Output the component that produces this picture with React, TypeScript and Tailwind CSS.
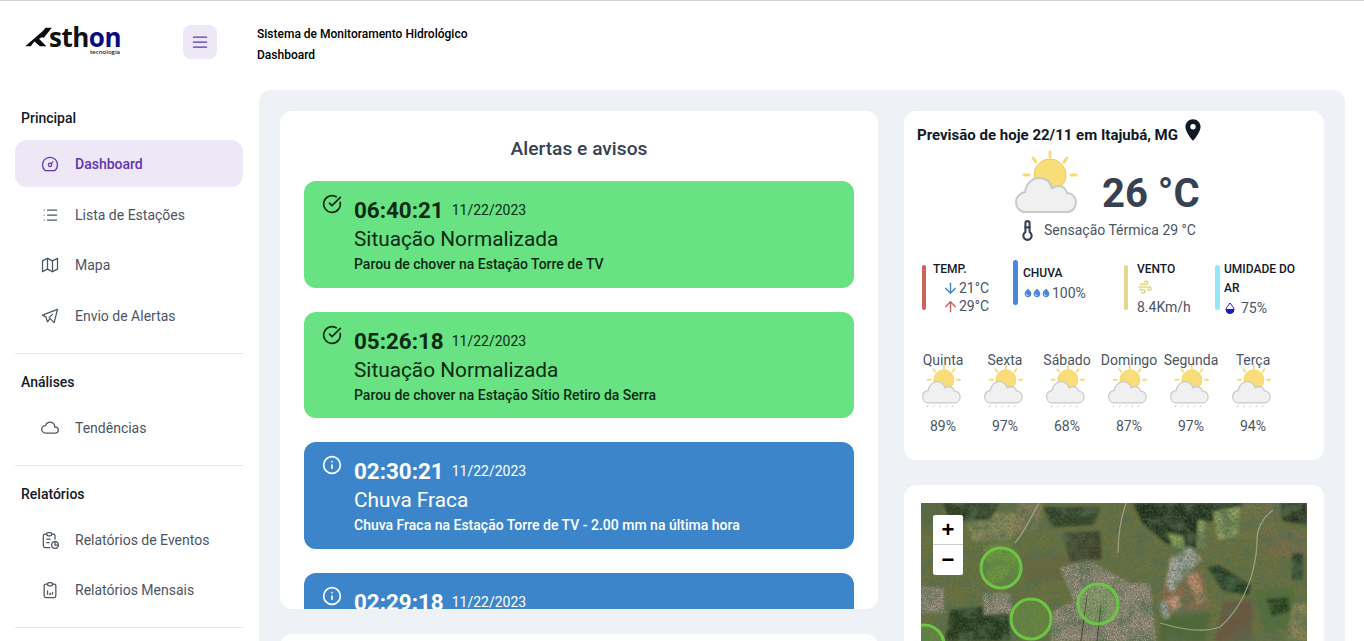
import type { ReactNode } from "react";
import { Info, CircleCheckBig } from "lucide-react";
import {
  TbBrandTelegram,
  TbClipboardData,
  TbCloud,
  TbDashboard,
  TbList,
  TbMap,
  TbMenu2,
  TbReport,
  TbTemperature,
  TbWind,
} from "react-icons/tb";
import { MdArrowDownward, MdArrowUpward, MdLocationOn, MdWaterDrop } from "react-icons/md";

/* ── Logo ── */

function Logo() {
  return (
    <div className="relative h-[32px] w-[96px] font-['Open_Sans',sans-serif]">
      <svg viewBox="0 0 30 24" className="absolute left-0 top-[4px] h-[22px] w-[28px]">
        <path d="M0 22 L22 3 L21 11 L15 14 L23 22 L16 22 L10 17 L6 22 Z" fill="#0b0b14" />
        <path d="M29 2 L22 2 L17 11 L20 13 Z" fill="#0b0b14" />
      </svg>
      <span className="absolute left-[24px] top-[-1px] text-[26px] leading-[32px] font-bold tracking-[-0.5px] text-[#111]">
        sth<span className="text-[#0a0a80]">on</span>
      </span>
      <span className="absolute left-[65px] top-[26px] text-[6px] font-semibold leading-[8px] text-[#222]">
        tecnologia
      </span>
    </div>
  );
}

/* ── Sidebar ── */

function NavItem({ icon, label, active }: { icon: ReactNode; label: string; active?: boolean }) {
  return (
    <div
      className={`flex h-[47px] items-center rounded-xl pl-[25px] text-sm ${
        active ? "bg-[#ede7f6] font-medium text-[#5e35b1]" : "text-[#4b5565]"
      }`}
    >
      <span className="flex w-[35px] shrink-0">{icon}</span>
      {label}
    </div>
  );
}

function SectionTitle({ children }: { children: ReactNode }) {
  return <div className="pl-[6px] text-sm font-medium leading-[20px] text-[#121926]">{children}</div>;
}

function Sidebar() {
  const ic = "h-[20px] w-[20px] stroke-[1.5]";
  return (
    <aside className="w-[259px] shrink-0 pl-[15px] pr-[16px]">
      <div className="pt-[18px]">
        <SectionTitle>Principal</SectionTitle>
      </div>
      <div className="mt-[12px]">
        <NavItem active icon={<TbDashboard className={ic} />} label="Dashboard" />
        <div className="mt-[4px]">
          <NavItem icon={<TbList className={ic} />} label="Lista de Estações" />
        </div>
        <div className="mt-[3px]">
          <NavItem icon={<TbMap className={ic} />} label="Mapa" />
        </div>
        <div className="mt-[4px]">
          <NavItem icon={<TbBrandTelegram className={ic} />} label="Envio de Alertas" />
        </div>
      </div>
      <div className="mt-[14px] border-t border-[#e3e8ef]" />
      <div className="mt-[18px]">
        <SectionTitle>Análises</SectionTitle>
      </div>
      <div className="mt-[12px]">
        <NavItem icon={<TbCloud className={ic} />} label="Tendências" />
      </div>
      <div className="mt-[14px] border-t border-[#e3e8ef]" />
      <div className="mt-[18px]">
        <SectionTitle>Relatórios</SectionTitle>
      </div>
      <div className="mt-[12px]">
        <NavItem icon={<TbReport className={ic} />} label="Relatórios de Eventos" />
        <div className="mt-[3px]">
          <NavItem icon={<TbClipboardData className={ic} />} label="Relatórios Mensais" />
        </div>
      </div>
      <div className="mt-[14px] border-t border-[#e3e8ef]" />
    </aside>
  );
}

/* ── Alerts ── */

type Alert = { time: string; title: string; text: string; kind: "ok" | "info" };

const alerts: Alert[] = [
  { time: "06:40:21", title: "Situação Normalizada", text: "Parou de chover na Estação Torre de TV", kind: "ok" },
  { time: "05:26:18", title: "Situação Normalizada", text: "Parou de chover na Estação Sítio Retiro da Serra", kind: "ok" },
  { time: "02:30:21", title: "Chuva Fraca", text: "Chuva Fraca na Estação Torre de TV - 2.00 mm na última hora", kind: "info" },
  { time: "02:29:18", title: "Chuva Fraca", text: "Chuva Fraca na Estação Sítio Retiro da Serra", kind: "info" },
];

function AlertCard({ alert }: { alert: Alert }) {
  const ok = alert.kind === "ok";
  return (
    <div
      className={`flex h-[106.5px] shrink-0 rounded-xl pl-[18px] pt-[13px] ${
        ok ? "bg-[#69e283] text-[#0d2b14]" : "bg-[#3d85cb] text-white"
      }`}
    >
      <span className="w-[32px] shrink-0">
        {ok ? <CircleCheckBig className="h-[20px] w-[20px]" strokeWidth={2} /> : <Info className="h-[20px] w-[20px]" strokeWidth={2} />}
      </span>
      <div>
        <div className="mt-[2px] flex items-center">
          <span className="text-[22.4px] leading-[28px] font-bold">{alert.time}</span>
          <span className="ml-[8px] text-sm">11/22/2023</span>
        </div>
        <div className="mt-[1px] text-[20.8px] leading-[28px]">{alert.title}</div>
        <div className="mt-[1px] text-sm leading-[21px] font-medium">{alert.text}</div>
      </div>
    </div>
  );
}

function AlertsCard() {
  return (
    <div className="flex h-[498px] flex-col overflow-hidden rounded-xl bg-white px-[24px]">
      <h2 className="mb-[20px] mt-[26px] text-center text-[19.2px] leading-[24px] font-medium text-[#364152]">Alertas e avisos</h2>
      <div className="flex flex-col gap-[24px]">
        {alerts.map((a) => (
          <AlertCard key={a.time} alert={a} />
        ))}
      </div>
    </div>
  );
}

/* ── Weather ── */

function SunCloud({ rain, className }: { rain?: boolean; className: string }) {
  return (
    <svg viewBox={rain ? "0 0 64 70" : "0 0 64 64"} className={className}>
      <g stroke="#f7dc74" strokeWidth="3" strokeLinecap="round">
        <path d="M35 2v5M18 8l3 4M52 8l-3 4M9 25h5M56 25h5" />
      </g>
      <circle cx="35" cy="25" r="16" fill="#f9dd78" stroke="#eccb5c" strokeWidth="1" />
      <path
        d="M10 62c-5 0-9-4-9-10 0-5 4-9 9-10 1-8 7-14 14-14 6 0 11 3 13 10 2-1 4-2 6-2 5 0 8 3 9 7 5 0 9 4 9 9 0 6-4 10-9 10Z"
        fill="#f0f0f0"
        stroke="#c9c9c9"
        strokeWidth="2"
      />
      {rain && (
        <path
          d="M10 66l-2 3M20 66l-2 3M30 66l-2 3M40 66l-2 3M50 66l-2 3"
          stroke="#b5b5b5"
          strokeWidth="1.2"
        />
      )}
    </svg>
  );
}

const forecast = [
  { d: "Quinta", p: "89%" },
  { d: "Sexta", p: "97%" },
  { d: "Sábado", p: "68%" },
  { d: "Domingo", p: "87%" },
  { d: "Segunda", p: "97%" },
  { d: "Terça", p: "94%" },
];

function Stat({
  color,
  w,
  barW = "w-[4px]",
  gap = "ml-[7px]",
  top = "mt-[5px]",
  children,
}: {
  color: string;
  w: string;
  barW?: string;
  gap?: string;
  top?: string;
  children: ReactNode;
}) {
  return (
    <div className={`flex ${w} shrink-0 ${top}`}>
      <span className={`h-[45px] ${barW} shrink-0 rounded-full ${color}`} />
      <div className={`${gap} text-sm leading-[20px] text-[#4b5565]`}>{children}</div>
    </div>
  );
}

function WeatherCard() {
  return (
    <div className="h-[349px] rounded-xl bg-white px-[13px]">
      <div className="flex pt-[6px]">
        <h3 className="mt-[8px] text-[15px] leading-[20px] font-bold text-[#121926]">Previsão de hoje 22/11 em Itajubá, MG</h3>
        <MdLocationOn className="ml-[2px] h-[26px] w-[26px] text-[#121926]" />
      </div>
      <div className="ml-[98px] mt-[5px] flex">
        <SunCloud className="h-[64px] w-[64px]" />
        <span className="ml-[23px] mt-[18px] text-[40px] leading-[52px] font-bold text-[#364152]">26 °C</span>
      </div>
      <div className="ml-[98px] flex h-[20px] items-center text-sm text-[#4b5565]">
        <TbTemperature className="h-[25px] w-[25px] text-[#364152]" />
        <span className="ml-[4px]">Sensação Térmica 29 °C</span>
      </div>

      <div className="ml-[5px] mt-[20px] flex">
        <Stat color="bg-[#c9635f]" w="w-[91px]">
          <div className="mt-[-5px] text-xs leading-[19px] font-medium text-[#121926]">TEMP.</div>
          <div className="ml-[9px] flex h-[18px] items-center">
            <MdArrowDownward className="h-[17px] w-[17px] text-[#3d85c6]" />
            <span>21°C</span>
          </div>
          <div className="ml-[9px] flex h-[18px] items-center">
            <MdArrowUpward className="h-[17px] w-[17px] text-[#c9635f]" />
            <span>29°C</span>
          </div>
        </Stat>
        <Stat color="bg-[#4a85e0]" w="w-[111px]" barW="w-[5px]" gap="ml-[5px]" top="mt-0">
          <div className="mt-[4px] text-xs leading-[18px] font-medium text-[#121926]">CHUVA</div>
          <div className="mt-[2px] flex h-[18px] items-center">
            <MdWaterDrop className="h-[10px] w-[10px] text-[#4a85e0]" />
            <MdWaterDrop className="ml-[-1px] h-[10px] w-[10px] text-[#4a85e0]" />
            <MdWaterDrop className="ml-[-1px] h-[10px] w-[10px] text-[#4a85e0]" />
            <span className="ml-[1px]">100%</span>
          </div>
        </Stat>
        <Stat color="bg-[#e2d98a]" w="w-[91px]" gap="ml-[9px]">
          <div className="mt-[-6px] text-xs leading-[20px] font-medium text-[#121926]">VENTO</div>
          <TbWind className="h-[16px] w-[16px] stroke-[2.5] text-[#e2d98a]" />
          <div className="leading-[24px]">8.4Km/h</div>
        </Stat>
        <Stat color="bg-[#97e6f4]" w="w-[100px]" barW="w-[5px]" gap="ml-[4px]">
          <div className="mt-[-5px] w-[80px] text-xs leading-[19px] font-medium text-[#121926]">UMIDADE DO AR</div>
          <div className="mt-[1px] flex h-[18px] items-center">
            <svg viewBox="0 0 12 12" className="h-[12px] w-[12px]">
              <path d="M6 1 C8 4 10 5.5 10 7.5 A4 4 0 0 1 2 7.5 C2 5.5 4 4 6 1Z" fill="#fff" stroke="#1a1ab8" strokeWidth="1" />
              <path d="M2 7 h8 v.5 A4 4 0 0 1 2 7.5Z" fill="#1a1ab8" />
            </svg>
            <span className="ml-[5px]">75%</span>
          </div>
        </Stat>
      </div>

      <div className="ml-[-5px] mt-[31px] flex">
        {forecast.map((f) => (
          <div key={f.d} className="flex w-[62px] shrink-0 flex-col items-center text-sm text-[#4b5565]">
            <span className="relative z-10 whitespace-nowrap leading-[20px]">{f.d}</span>
            <SunCloud rain className="ml-[-2px] mt-[-6px] h-[44px] w-[40px]" />
            <span className="mt-[8px] leading-[20px]">{f.p}</span>
          </div>
        ))}
      </div>
    </div>
  );
}

/* ── Map ── */

function SatelliteMap() {
  return (
    <svg viewBox="0 0 386 138" preserveAspectRatio="none" className="block h-[138px] w-[386px]">
      <defs>
        <filter id="soft" x="-10%" y="-10%" width="120%" height="120%">
          <feGaussianBlur stdDeviation="1.6" />
        </filter>
        <filter id="blotch" x="0" y="0" width="100%" height="100%">
          <feTurbulence type="fractalNoise" baseFrequency="0.07" numOctaves="4" seed="11" />
          <feColorMatrix values="0 0 0 0 0.09  0 0 0 0 0.16  0 0 0 0 0.08  2.6 0 0 0 -1.05" />
        </filter>
        <filter id="grain" x="0" y="0" width="100%" height="100%">
          <feTurbulence type="fractalNoise" baseFrequency="0.45" numOctaves="3" seed="7" />
          <feColorMatrix values="0 0 0 0 0.1  0 0 0 0 0.12  0 0 0 0 0.06  2.2 0 0 0 -0.85" />
        </filter>
        <filter id="roofs" x="0" y="0" width="100%" height="100%">
          <feTurbulence type="fractalNoise" baseFrequency="0.9" numOctaves="2" seed="3" />
          <feColorMatrix values="0 0 0 0 0.85  0 0 0 0 0.8  0 0 0 0 0.75  3 0 0 0 -1.5" />
        </filter>
        <clipPath id="urban">
          <path d="M0 84h22l2 26H0ZM62 90h27l4 20-30 2ZM139 64l30-6 47 26 8 54H129l4-30 20-10-8-18ZM189 80h40l6 58h-46Z" />
        </clipPath>
      </defs>
      <rect width="386" height="138" fill="#6b7340" />
      <g filter="url(#soft)">
        <path d="M42 10h54l-4 27-40 2Z" fill="#8b8a5a" />
        <path d="M0 0h24l-6 18-18 6Z" fill="#5c6a3f" />
        <path d="M22 0h57l-10 17-40 2Z" fill="#2a3a22" />
        <path d="M96 0h26l-6 26-22 4Z" fill="#8b7f5c" />
        <path d="M122 4h57l-6 18-42 2Z" fill="#2e3f25" />
        <path d="M142 30l37-2 2 28-32 3Z" fill="#3e3f2c" />
        <path d="M212 0h110l-8 14-30 5-8 26-30-4-24-20Z" fill="#1c2f1d" />
        <path d="M246 30l16 3 2 14-12-4Z" fill="#84a05a" />
        <path d="M277 17l7 1v26h-8Z" fill="#8fa565" />
        <path d="M292 9l27-6-2 30-20 4Z" fill="#92a262" />
        <path d="M322 0h37l-8 30-30 6Z" fill="#73744a" />
        <path d="M359 0h27v22l-24-4Z" fill="#202f1c" />
        <path d="M340 24l46 4v22l-30 6-14-10Z" fill="#7a7048" />
        <path d="M371 50l11 0v27h-11Z" fill="#28402a" />
        <path d="M99 54l47-2 6 24-47 4Z" fill="#6b6b3e" />
        <path d="M62 42l30-4 10 30-34 14Z" fill="#6f8c3e" />
        <path d="M29 107l57-6 4 37H24Z" fill="#20381d" />
        <path d="M286 64l12-2 32 20-2 10-26-4Z" fill="#233b24" />
        <path d="M247 67l34 0 8 36-36 12-18-8Z" fill="#8e6c50" />
        <path d="M262 70l14 0 10 26-10 6-6-16Z" fill="#b98a68" />
        <path d="M247 96l10-4 4 12-8 6Z" fill="#c59a7c" />
        <path d="M302 100l30-4-2 42h-36Z" fill="#6e5640" />
        <path d="M332 87l40-2 6 36-34 10Z" fill="#52713a" />
        <path d="M345 96l22-2 2 14-18 6Z" fill="#26401f" />
        <path d="M372 100h14v38h-20Z" fill="#8b8755" />
        <path d="M240 112l50-2-6 28h-46Z" fill="#4d6a35" />
        <g clipPath="url(#urban)">
          <rect width="386" height="138" fill="#8f8474" />
        </g>
        <path d="M249 56l20-12 12 12-22 22-8 12-6-8Z" fill="#a9aba6" />
        <path d="M238 100l8-2 3 16-6 2Z" fill="#a5a8a4" />
      </g>
      <rect width="386" height="138" filter="url(#blotch)" opacity="0.75" />
      <rect width="386" height="138" filter="url(#grain)" opacity="0.7" />
      <g clipPath="url(#urban)">
        <rect width="386" height="138" filter="url(#roofs)" opacity="0.45" />
      </g>
      <path
        d="M352 7c-10 8-16 18-16 30 0 12-2 22-4 30-2 10-6 18-10 27-6 12-14 22-23 30-16 6-40 2-60-4M118 0c-8 14-14 28-24 40M205 0c-5 15-8 32-8 50"
        fill="none"
        stroke="#aaa98f"
        strokeWidth="1.2"
        opacity="0.85"
      />
      <path d="M160 138l6-46M176 138l4-36" stroke="#2b2620" strokeWidth="1" opacity="0.7" />
      <g fill="#6bc644" fillOpacity="0.22" stroke="#6bc644" strokeWidth="3">
        <circle cx="80" cy="65" r="20" />
        <circle cx="110" cy="116" r="20" />
        <circle cx="177" cy="101" r="20" />
        <circle cx="3" cy="142" r="20" />
      </g>
    </svg>
  );
}

function MapCard() {
  return (
    <div className="mt-[25px] rounded-xl bg-white px-[17px] pt-[18px]">
      <div className="relative h-[400px] overflow-hidden bg-[#6b7340]">
        <SatelliteMap />
        <div className="absolute left-[12px] top-[12px] w-[30px] overflow-hidden rounded-[2px] bg-white text-center font-['Liberation_Sans',sans-serif] text-[22px] font-bold leading-[30px] text-black">
          <div className="h-[30px] border-b border-[#ccc]">+</div>
          <div className="h-[30px]">−</div>
        </div>
      </div>
    </div>
  );
}

export default function App() {
  return (
    <div className="flex h-screen flex-col overflow-hidden border-t border-[#d5d5cf] bg-white font-['Roboto',sans-serif]">
      <header className="flex h-[89px] shrink-0">
        <div className="ml-[25px] mt-[21px]">
          <Logo />
        </div>
        <button className="ml-[62px] mt-[24px] flex h-[34px] w-[34px] items-center justify-center rounded-lg bg-[#ede7f6] text-[#5e35b1]">
          <TbMenu2 className="h-[20px] w-[20px] stroke-[1.5]" />
        </button>
        <div className="ml-[40px] mt-[23px] text-xs leading-[21px] font-medium text-black">
          <div>Sistema de Monitoramento Hidrológico</div>
          <div>Dashboard</div>
        </div>
      </header>
      <div className="flex min-h-0 flex-1 pr-[19px]">
        <Sidebar />
        <main className="flex flex-1 gap-[26px] rounded-t-xl bg-[#eef2f6] px-[21px] pt-[21px]">
          <div className="w-[598px] shrink-0">
            <AlertsCard />
            <div className="mt-[25px] h-[200px] rounded-xl bg-white" />
          </div>
          <div className="w-[420px] shrink-0">
            <WeatherCard />
            <MapCard />
          </div>
        </main>
      </div>
    </div>
  );
}
